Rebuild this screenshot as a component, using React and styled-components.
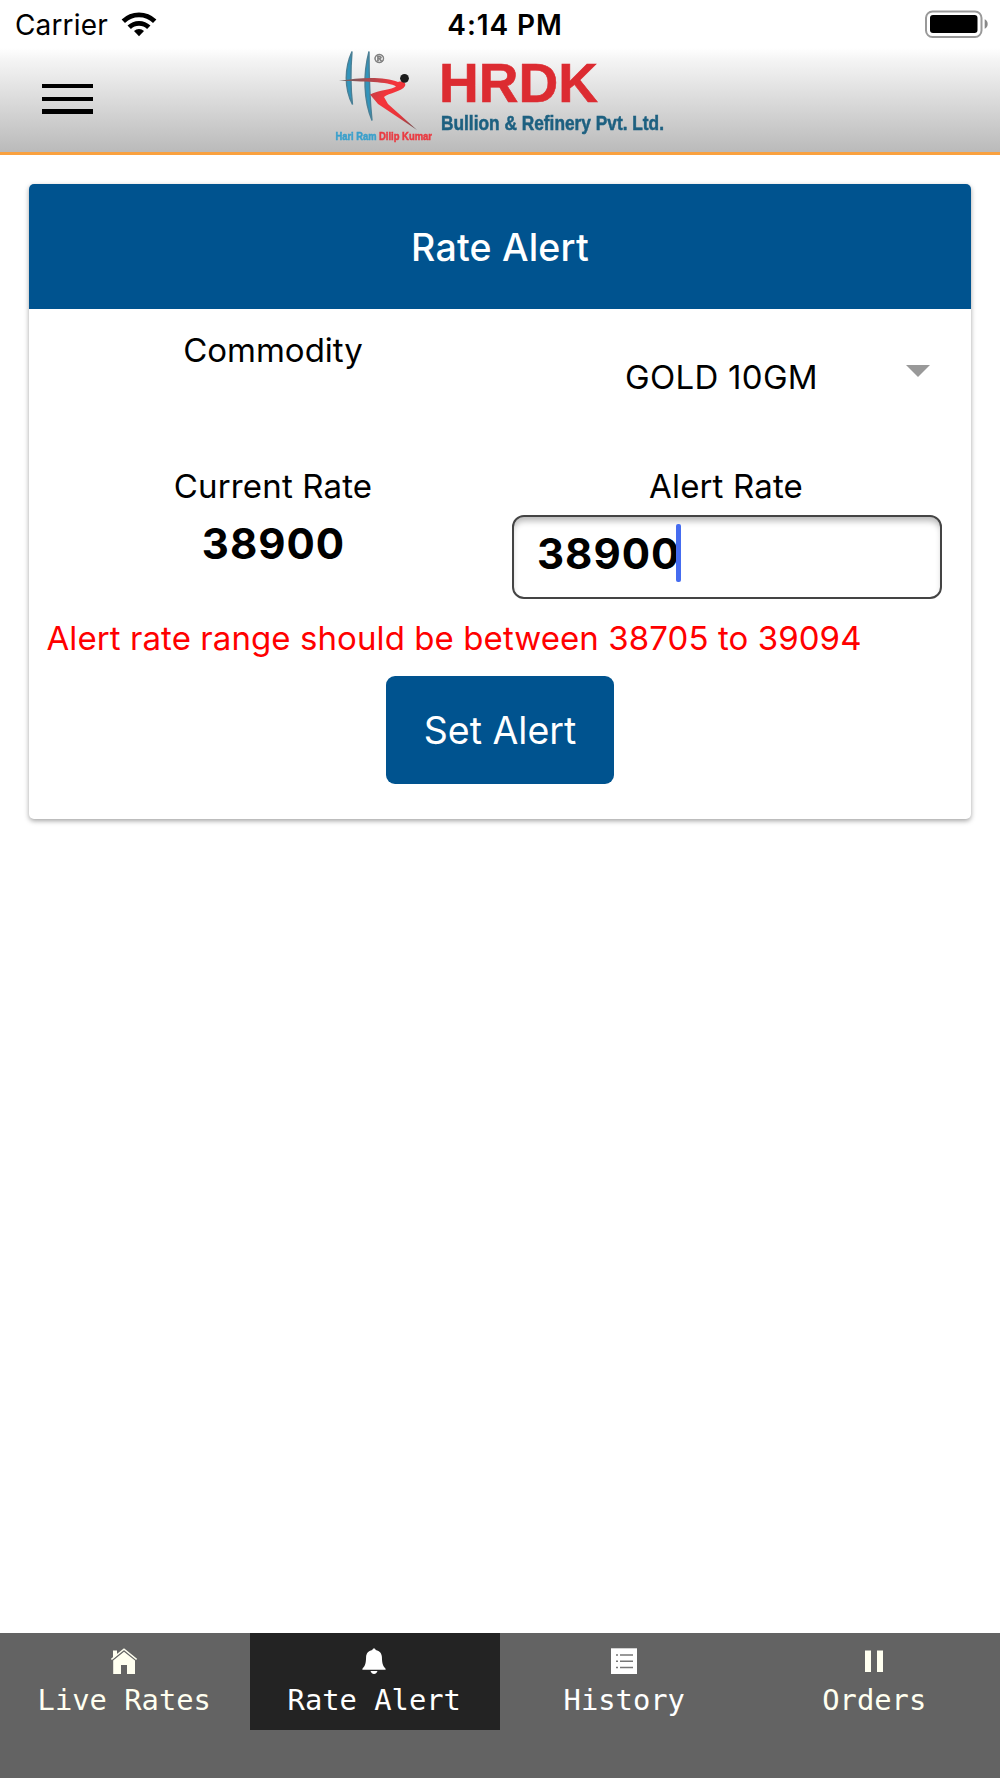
import React, { useState } from "react";
import styled, { createGlobalStyle } from "styled-components";

const GlobalStyle = createGlobalStyle`
  * {
    box-sizing: border-box;
  }
  body {
    margin: 0;
    background: #fff;
    color: #000;
    font-family: Inter, "Liberation Sans", sans-serif;
  }
`;

const Screen = styled.div`
  display: flex;
  flex-direction: column;
  width: 1000px;
  height: 1778px;
  background: #fff;
`;

const StatusBar = styled.div`
  display: grid;
  grid-template-columns: 1fr auto 1fr;
  align-items: start;
  height: 48px;
  padding: 8px 12px 0 15px;
  font-size: 28px;
  line-height: 35px;
`;

const Carrier = styled.div`
  display: flex;
  gap: 13px;
  letter-spacing: 0.15px;
`;

const WifiIcon = styled.svg`
  width: 36px;
  height: 26px;
  margin-top: 3px;
`;

const Clock = styled.div`
  font-weight: 600;
  padding-left: 7px;
  letter-spacing: 0.9px;
`;

const BatteryIcon = styled.svg`
  justify-self: end;
  width: 64px;
  height: 28px;
  margin-top: 2px;
`;

const Toolbar = styled.header`
  display: grid;
  grid-template-columns: 1fr 340px 1fr;
  align-items: start;
  height: 107px;
  border-bottom: 3px solid #f9a13f;
  background: linear-gradient(#fff, #f4f4f4 12%, #bababa);
`;

const MenuButton = styled.button`
  display: flex;
  flex-direction: column;
  gap: 8.2px;
  width: 51px;
  margin: 36px 0 0 42px;
  padding: 0;
  border: 0;
  background: none;
`;

const MenuLine = styled.span`
  height: 4.4px;
  background: #000;
`;

const Logo = styled.svg`
  width: 340px;
  height: 102px;
  overflow: visible;
  font-family: "Liberation Sans", sans-serif;
  font-weight: 700;
  filter: blur(0.6px);
`;

const Content = styled.main`
  flex: 1;
  padding: 29px;
`;

const Card = styled.section`
  border-radius: 5px;
  overflow: hidden;
  box-shadow: 0 2px 5px rgba(0, 0, 0, 0.36);
`;

const CardHeader = styled.h1`
  margin: 0;
  height: 125px;
  background: #00538f;
  color: #fff;
  font-size: 37.5px;
  font-weight: 500;
  line-height: 127px;
  letter-spacing: 0.2px;
  text-align: center;
`;

const CardBody = styled.div`
  padding: 0 18px 35px;
`;

const Row = styled.div`
  display: grid;
  grid-template-columns: 1fr 1fr;
  height: ${({ $height }) => $height}px;
`;

const Column = styled.div`
  text-align: center;
`;

const Label = styled.div`
  padding-top: ${({ $top }) => $top || 0}px;
  padding-right: 1px;
  font-size: 33px;
  line-height: 40px;
  letter-spacing: ${({ $spacing }) => $spacing || 0}px;
`;

const Select = styled.div`
  display: flex;
  justify-content: space-between;
  padding: 48px 23px 0 125px;
  font-size: 33px;
  line-height: 40px;
  letter-spacing: 0.3px;
`;

const Arrow = styled.span`
  height: 0;
  margin-top: 8px;
  border: 12px solid transparent;
  border-top-color: #999;
  border-bottom: 0;
`;

const CurrentRate = styled.div`
  margin-top: 12px;
  font-size: 42px;
  font-weight: 700;
  line-height: 51px;
  letter-spacing: 1px;
`;

const RateField = styled.div`
  display: flex;
  height: 84px;
  margin: 9px 11px 0 12px;
  padding: 7px 23px;
  border: 2px solid #444;
  border-radius: 12px;
  box-shadow: inset 0 6px 6px -2px rgba(0, 0, 0, 0.28);
  font-size: 42px;
  font-weight: 700;
  line-height: 60px;
  letter-spacing: 1px;
`;

const Caret = styled.span`
  width: 5px;
  height: 58px;
  margin-left: -4px;
  border-radius: 2px;
  background: #456cf0;
`;

const Warning = styled.p`
  margin: 19px 0 18px -0.5px;
  color: #f00;
  font-size: 33px;
  line-height: 40px;
  letter-spacing: 0.08px;
  white-space: nowrap;
`;

const SetButton = styled.button`
  display: block;
  width: 228px;
  height: 108px;
  margin: 0 auto;
  padding: 0;
  border: 0;
  border-radius: 9px;
  background: #00538f;
  color: #fff;
  font-family: inherit;
  font-size: 37.5px;
  line-height: 110px;
`;

const TabBar = styled.nav`
  display: grid;
  grid-template-columns: repeat(4, 1fr);
  align-items: start;
  height: 145px;
  background: #636363;
`;

const Tab = styled.div`
  display: flex;
  flex-direction: column;
  align-items: center;
  height: 96.5px;
  padding: 15px 1.5px 0 0;
  background: ${({ $active }) => ($active ? "#232323" : "transparent")};
  color: ${({ $color }) => $color};
  font-family: "DejaVu Sans Mono", monospace;
  font-size: 28.8px;
  line-height: 34px;
`;

const TabIcon = styled.svg`
  width: 26px;
  height: 27px;
  margin-bottom: 8px;
  fill: currentColor;
`;

const tabs = [
  {
    name: "Live Rates",
    color: "#fffff0",
    icon: (
      <>
        <path d="M2 2.500h4v4.700l-4 3.400z" />
        <path d="M.4 11.400 13 1.200l12.600 10.200" fill="none" stroke="currentColor" strokeWidth="1.500" />
        <path d="M2.200 12.400 13 3.700l11 8.700V26h-8v-9H10v9H2.200z" />
      </>
    ),
  },
  {
    name: "Rate Alert",
    color: "#ffffff",
    icon: (
      <>
        <path d="M13 .4c1 0 1.600.7 1.700 1.500 4.200.8 6.100 3.500 6.200 7.200.2 6 .7 8.800 3.700 11.600v1.100H1.400v-1.100c3-2.800 3.500-5.600 3.700-11.600.1-3.700 2-6.400 6.200-7.200C11.400 1.100 12 .4 13 .4z" />
        <path d="M9.500 23h7c-.7 1.900-1.900 3-3.500 3s-2.800-1.100-3.500-3z" />
      </>
    ),
  },
  {
    name: "History",
    color: "#ffffff",
    icon: (
      <>
        <path d="M0 .3h26V26H0z" />
        <path
          d="M5 6.900h2M9 6.900h13M5 13.200h2M9 13.200h13M5 19.500h2M9 19.500h13"
          fill="none"
          stroke="#777"
          strokeWidth="1.500"
        />
      </>
    ),
  },
  {
    name: "Orders",
    color: "#fffff0",
    icon: <path d="M4 2.500h6V24H4zM16 2.500h6V24h-6z" />,
  },
];

const HrdkLogo = () => (
  <Logo viewBox="0 8 340 102">
    <defs>
      <linearGradient id="figure" gradientUnits="userSpaceOnUse" x1="10" y1="41" x2="88" y2="90">
        <stop offset="0" stopColor="#666" />
        <stop offset="0.3" stopColor="#b5444a" />
        <stop offset="0.5" stopColor="#f5343a" />
        <stop offset="0.75" stopColor="#e8343a" />
        <stop offset="1" stopColor="#555" />
      </linearGradient>
    </defs>
    <path d="M22 11.500C14.500 28 14 48 22.500 64.500 20.500 48 20.500 30 22 11.500z" fill="#3294bb" stroke="#4a7f95" strokeWidth="1.400" />
    <path d="M39 11.500C33 34 33.500 60 42 80.500 39.500 57 39 34 39 11.500z" fill="#3294bb" stroke="#4a7f95" strokeWidth="1.400" />
    <path
      d="M9 41C32 37 55 37 68 42 73 40.500 76.500 43 75 46 72 51.500 59 53 54 57L58 64 87 90 48 64 40 54.500C49 50 62 49.500 66 46.500 59 41.500 32 41.500 9 41z"
      fill="url(#figure)"
    />
    <circle cx="74.500" cy="38.300" r="4.400" fill="#1c1c1c" />
    <text x="44.500" y="23" fontSize="13" fill="#808080" stroke="#808080" strokeWidth="0.600">
      ®
    </text>
    <text x="5.500" y="100" fontSize="11" fill="#3aa0cc" stroke="#3aa0cc" strokeWidth="0.500" textLength="41" lengthAdjust="spacingAndGlyphs">
      Hari Ram
    </text>
    <text x="49" y="100" fontSize="11" fill="#ea3b42" stroke="#ea3b42" strokeWidth="0.500" textLength="53" lengthAdjust="spacingAndGlyphs">
      Dilip Kumar
    </text>
    <text x="109" y="61.500" fontSize="56" fill="#dc2b31" stroke="#dc2b31" strokeWidth="0.600" textLength="159" lengthAdjust="spacingAndGlyphs">
      HRDK
    </text>
    <text x="111" y="90.300" fontSize="19.500" fill="#1d6080" stroke="#1d6080" strokeWidth="0.500" textLength="223" lengthAdjust="spacingAndGlyphs">
      Bullion &amp; Refinery Pvt. Ltd.
    </text>
  </Logo>
);

const App = () => {
  const [activeTab, setActiveTab] = useState("Rate Alert");

  return (
    <Screen>
      <GlobalStyle />
      <StatusBar>
        <Carrier>
          Carrier
          <WifiIcon viewBox="0 0 36 26">
            <g fill="none" stroke="#000" strokeWidth="4.800">
              <path d="M2.300 10.200a22.500 22.500 0 0 1 31.400 0" />
              <path d="M8.200 16.300a14 14 0 0 1 19.600 0" />
            </g>
            <path d="M18 25.300l-5-5.200a7.300 7.300 0 0 1 10 0z" />
          </WifiIcon>
        </Carrier>
        <Clock>4:14 PM</Clock>
        <BatteryIcon viewBox="0 0 64 28">
          <rect x="2" y="1.500" width="55.500" height="25.500" rx="6.500" fill="#fff" stroke="#999" strokeWidth="2" />
          <rect x="6" y="5" width="47.500" height="18" rx="3" />
          <path d="M60.700 9.300c4 1.700 4 7.700 0 9.400z" fill="#888" />
        </BatteryIcon>
      </StatusBar>

      <Toolbar>
        <MenuButton aria-label="Menu">
          <MenuLine />
          <MenuLine />
          <MenuLine />
        </MenuButton>
        <HrdkLogo />
      </Toolbar>

      <Content>
        <Card>
          <CardHeader>Rate Alert</CardHeader>
          <CardBody>
            <Row $height={157}>
              <Column>
                <Label $top={21}>Commodity</Label>
              </Column>
              <Select>
                GOLD 10GM
                <Arrow />
              </Select>
            </Row>
            <Row $height={133}>
              <Column>
                <Label $spacing={0.15}>Current Rate</Label>
                <CurrentRate>38900</CurrentRate>
              </Column>
              <Column>
                <Label $spacing={0.15}>Alert Rate</Label>
                <RateField>
                  38900
                  <Caret />
                </RateField>
              </Column>
            </Row>
            <Warning>Alert rate range should be between 38705 to 39094</Warning>
            <SetButton>Set Alert</SetButton>
          </CardBody>
        </Card>
      </Content>

      <TabBar>
        {tabs.map((tab) => (
          <Tab
            key={tab.name}
            $active={tab.name === activeTab}
            $color={tab.color}
            onClick={() => setActiveTab(tab.name)}
          >
            <TabIcon viewBox="0 0 26 27">{tab.icon}</TabIcon>
            {tab.name}
          </Tab>
        ))}
      </TabBar>
    </Screen>
  );
};

export default App;
